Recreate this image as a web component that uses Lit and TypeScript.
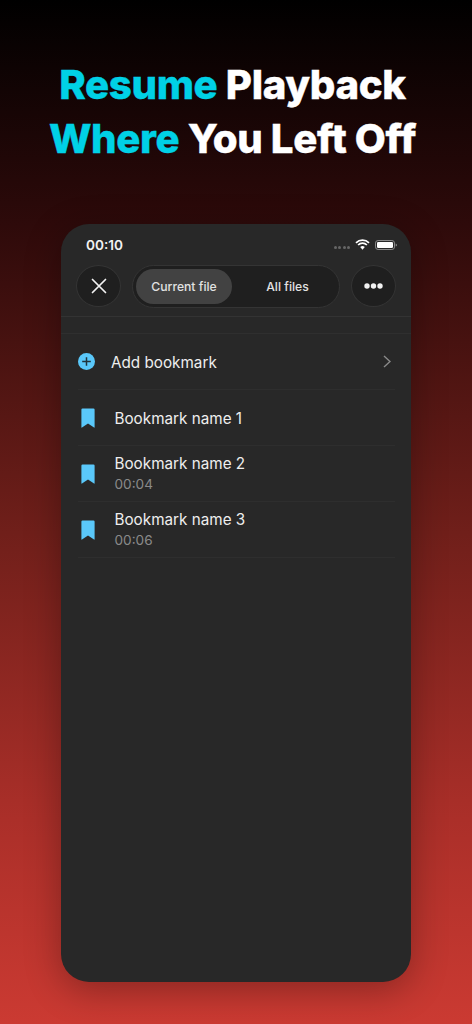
import { LitElement, html, css } from "lit";
import { customElement } from "lit/decorators.js";

const bookmark = html`<svg class="bm" viewBox="0 0 14 20" width="14" height="20"><path d="M1.6 0.4H12.4Q13.6 0.4 13.6 1.6V19.2Q13.6 19.9 13 19.5L7 15.4L1 19.5Q0.4 19.9 0.4 19.2V1.6Q0.4 0.4 1.6 0.4Z" fill="#5ac8fa"/></svg>`;

@customElement("app-root")
export class AppRoot extends LitElement {
  static styles = css`
    :host {
      display: block;
      width: 472px;
      height: 1024px;
      overflow: hidden;
      font-family: Inter, "Liberation Sans", sans-serif;
      background: linear-gradient(180deg, #000 0%, #2e0a0a 22%, #701f1a 52%, #ab2f29 80%, #cb3a32 100%);
    }
    .page { display: flex; flex-direction: column; align-items: center; height: 100%; box-sizing: border-box; padding-top: 58px; }
    h1 { margin: 0; padding-right: 7px; font-size: 40.2px; line-height: 54px; font-weight: 800; color: #fff; text-align: center; letter-spacing: -0.35px; white-space: nowrap; -webkit-text-stroke: 0.4px currentColor; }
    h1 span { color: #00d1e6; }
    .phone { margin-top: 58px; width: 350px; height: 758px; box-sizing: border-box; border-radius: 28px; background: #282828; box-shadow: 0 8px 36px rgba(0,0,0,.3); color: #e9e9e9; flex: none; }
    .status { height: 40px; display: flex; align-items: center; padding: 1px 14px 0 25px; box-sizing: border-box; gap: 5px; }
    .time { font-size: 13.6px; font-weight: 600; color: #f2f2f2; flex: 1; }
    .dots { display: flex; gap: 1.5px; margin-top: 5px; }
    .dots i { width: 3px; height: 3px; border-radius: 50%; background: #666; }
    .toolbar { height: 44px; display: flex; align-items: center; padding: 0 15px; gap: 11px; }
    .round { width: 45px; height: 42px; border-radius: 50%; box-sizing: border-box; background: #1f1f1f; border: 1px solid #343434; display: flex; align-items: center; justify-content: center; flex: none; }
    .seg { flex: 1; height: 43px; box-sizing: border-box; border-radius: 22px; background: #1f1f1f; border: 1px solid #343434; display: flex; padding: 3px; font-size: 12.2px; font-weight: 500; color: #e2e2e2; }
    .seg div { width: 96px; display: flex; align-items: center; justify-content: center; border-radius: 18px; }
    .seg .on { background: #424242; }
    .seg .off { flex: 1; padding-left: 7px; }
    .sep1 { margin-top: 8px; height: 18px; border-top: 1px solid #333; border-bottom: 1px solid #2f2f2f; box-sizing: border-box; }
    .row { height: 56px; box-sizing: border-box; display: flex; align-items: center; margin: 0 16px 0 17px; border-bottom: 1px solid #2e2e2e; font-size: 15.25px; color: #eeeeee; }
    .add { gap: 16px; }
    .add .label { flex: 1; padding-top: 2px; }
    .chev { margin-right: 4px; }
    .icon-slot { width: 20px; display: flex; justify-content: center; flex: none; margin-right: 16.5px; }
    .bm { display: block; }
    .texts { display: flex; flex-direction: column; padding-top: 2px; }
    .texts.two { padding-top: 0; }
    .sub { font-size: 13.6px; color: #8a8a8a; }
    .line { line-height: 20px; }
  `;
  render() {
    const rows = [["Bookmark name 1", ""], ["Bookmark name 2", "00:04"], ["Bookmark name 3", "00:06"]];
    return html`<div class="page">
      <h1><span>Resume</span> Playback<br /><span>Where</span> You Left Off</h1>
      <div class="phone">
        <div class="status">
          <div class="time">00:10</div>
          <div class="dots"><i></i><i></i><i></i><i></i></div>
          <svg width="15" height="11" viewBox="0 0 15 11"><path d="M1 3.9A9.2 9.2 0 0 1 14 3.9M3.1 6A6.2 6.2 0 0 1 11.9 6" fill="none" stroke="#fff" stroke-width="1.7"/><path d="M5.2 8.1A3.2 3.2 0 0 1 9.8 8.1L7.5 10.8Z" fill="#fff"/></svg>
          <svg width="22" height="10" viewBox="0 0 22 10"><rect x=".5" y=".5" width="19" height="9" rx="2.6" fill="none" stroke="#8a8a8a"/><rect x="2" y="2" width="16" height="6" rx="1.3" fill="#fff"/><path d="M20.7 3.4Q22 4 22 5T20.7 6.6Z" fill="#8a8a8a"/></svg>
        </div>
        <div class="toolbar">
          <div class="round"><svg width="16" height="16" viewBox="0 0 16 16"><path d="M1.5 1.5L14.5 14.5M14.5 1.5L1.5 14.5" stroke="#f2f2f2" stroke-width="1.7" stroke-linecap="round"/></svg></div>
          <div class="seg"><div class="on">Current file</div><div class="off">All files</div></div>
          <div class="round"><svg width="19" height="6" viewBox="0 0 19 6"><circle cx="3" cy="3" r="2.7" fill="#f2f2f2"/><circle cx="9.5" cy="3" r="2.7" fill="#f2f2f2"/><circle cx="16" cy="3" r="2.7" fill="#f2f2f2"/></svg></div>
        </div>
        <div class="sep1"></div>
        <div class="row add">
          <svg width="17" height="17" viewBox="0 0 17 17"><circle cx="8.5" cy="8.5" r="8.5" fill="#5ac8fa"/><path d="M8.5 4.2V12.8M4.2 8.5H12.8" stroke="#20343d" stroke-width="1.5"/></svg>
          <div class="label">Add bookmark</div>
          <svg class="chev" width="8" height="13" viewBox="0 0 8 13"><path d="M1 1L7 6.5L1 12" fill="none" stroke="#8a8a8a" stroke-width="1.4"/></svg>
        </div>
        ${rows.map(([n, s]) => html`<div class="row">
          <div class="icon-slot">${bookmark}</div>
          <div class="texts ${s ? "two" : ""}"><div class="line">${n}</div>${s ? html`<div class="sub line">${s}</div>` : ""}</div>
        </div>`)}
      </div>
    </div>`;
  }
}
